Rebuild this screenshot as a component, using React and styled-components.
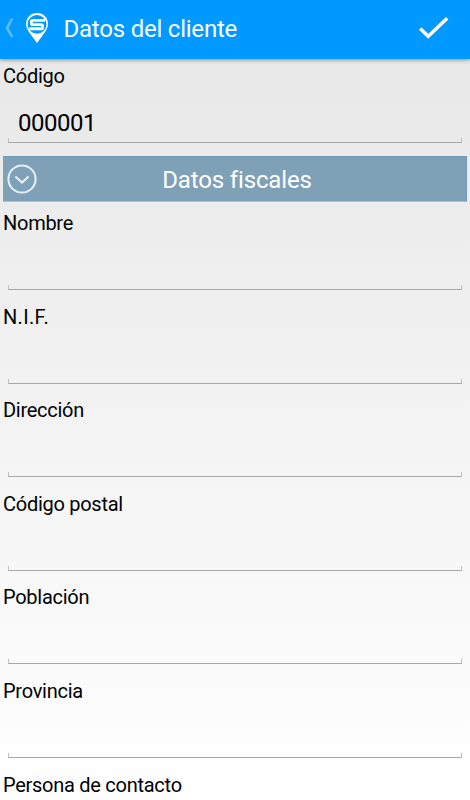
import React from "react";
import styled, { createGlobalStyle } from "styled-components";

const fields = [
  "Nombre",
  "N.I.F.",
  "Dirección",
  "Código postal",
  "Población",
  "Provincia",
  "Persona de contacto",
];

export default function App() {
  return (
    <Screen>
      <GlobalStyle />
      <Header>
        <BackIcon viewBox="0 0 9 20">
          <path d="M5.7 0.5H8.6L3.8 10L8.6 19H5.7L0.5 10Z" />
        </BackIcon>
        <PinLogo />
        <Title>Datos del cliente</Title>
        <CheckIcon viewBox="0 0 32 24">
          <path d="M2.2 12.5L10.2 20.3L29.2 2.2" />
        </CheckIcon>
      </Header>
      <Form>
        <Field label="Código" value="000001" />
        <SectionBar>
          <ToggleIcon viewBox="0 0 30 30">
            <circle cx="15" cy="15" r="13.6" />
            <path d="M8.4 12.4L15 18.6L21.6 12.4" />
          </ToggleIcon>
          <SectionTitle>Datos fiscales</SectionTitle>
        </SectionBar>
        {fields.map((label) => (
          <Field key={label} label={label} value="" />
        ))}
      </Form>
    </Screen>
  );
}

function Field({ label, value }) {
  return (
    <FieldRow>
      <Label $spacing={label === "N.I.F." ? "0.3px" : "-0.27px"}>{label}</Label>
      <Value>{value}</Value>
      <Underline />
    </FieldRow>
  );
}

function PinLogo() {
  return (
    <Pin viewBox="0 0 24 32">
      <path
        fill="#fff"
        d="M12 1C5.6 1 1 5.8 1 12C1 15.5 3 18.8 5.2 21.8L12 31L18.8 21.8C21 18.8 23 15.5 23 12C23 5.8 18.4 1 12 1Z"
      />
      <circle cx="12" cy="12.4" r="9.4" fill="#0099ff" />
      <path
        fill="none"
        stroke="#fff"
        strokeWidth="2.9"
        strokeLinejoin="round"
        d="M20 8.4H8Q6.4 8.4 6.4 9.8V11.2Q6.4 12.6 8 12.6H16Q17.6 12.6 17.6 14V15.4Q17.6 16.8 16 16.8H4.2"
      />
    </Pin>
  );
}

const GlobalStyle = createGlobalStyle`
  body {
    margin: 0;
    font-family: Roboto, sans-serif;
  }
`;

const Screen = styled.div`
  width: 100%;
  height: 800px;
  overflow: hidden;
  display: flex;
  flex-direction: column;
  background: linear-gradient(#e6e6e6, #ffffff);
`;

const Header = styled.header`
  height: 59px;
  flex-shrink: 0;
  box-sizing: border-box;
  padding: 0 20px 3px 5px;
  display: flex;
  align-items: center;
  background-color: #0099ff;
  box-shadow: 0 1px 4px rgba(0, 0, 0, 0.4);
`;

const BackIcon = styled.svg`
  width: 9px;
  height: 20px;
  fill: #58bbff;
`;

const Pin = styled.svg`
  width: 24px;
  height: 32px;
  margin-left: 11px;
`;

const Title = styled.h1`
  flex: 1;
  margin: 2px 0 0 14.5px;
  color: #fff;
  font-size: 24px;
  font-weight: 400;
  line-height: 30px;
  letter-spacing: -0.22px;
`;

const CheckIcon = styled.svg`
  width: 32px;
  height: 24px;
  fill: none;
  stroke: #fff;
  stroke-width: 3.4;
`;

const Form = styled.main`
  padding-top: 4px;
`;

const FieldRow = styled.div`
  height: 93.6px;
  display: flex;
  flex-direction: column;
`;

const Label = styled.label`
  padding-left: 3px;
  font-size: 20px;
  line-height: 26px;
  letter-spacing: ${(props) => props.$spacing};
  color: #000;
`;

const Value = styled.div`
  height: 49px;
  box-sizing: border-box;
  padding: 19px 0 0 18px;
  font-size: 24px;
  line-height: 30px;
  letter-spacing: -0.5px;
  color: #000;
`;

const Underline = styled.div`
  height: 5px;
  box-sizing: border-box;
  margin: 0 8px;
  border: 1px solid #c0c0c0;
  border-bottom-color: #a8a8a8;
  border-top: 0;
`;

const SectionBar = styled.section`
  height: 46px;
  box-sizing: border-box;
  margin: -0.6px 3px 8.1px;
  padding-left: 4px;
  display: flex;
  align-items: center;
  background-color: #7fa1b8;
  border: 1px solid #729dba;
  border-bottom-color: #a9c2d3;
  border-left: 0;
`;

const ToggleIcon = styled.svg`
  width: 30px;
  height: 30px;
  fill: none;
  stroke: #e8f1f7;
  stroke-width: 2;
`;

const SectionTitle = styled.h2`
  flex: 1;
  margin: 2px 29px 0 0;
  text-align: center;
  color: #fff;
  font-size: 24px;
  font-weight: 400;
  line-height: 30px;
  letter-spacing: -0.15px;
`;
